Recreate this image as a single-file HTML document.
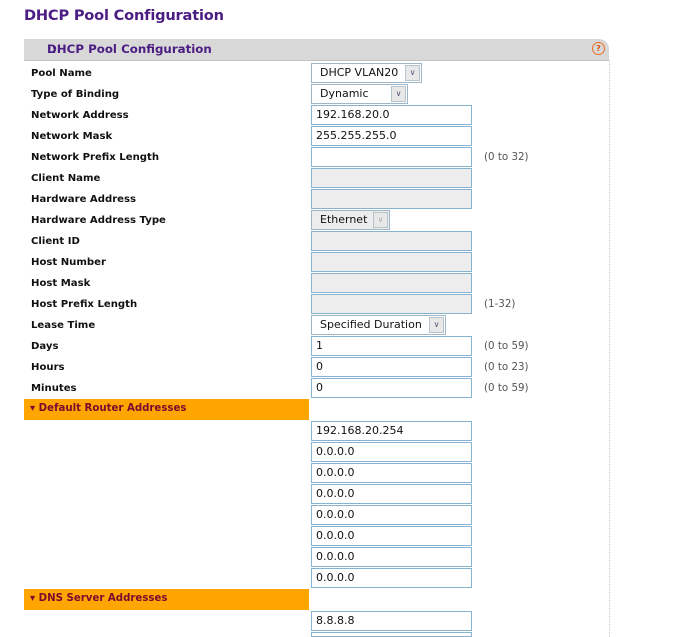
<!DOCTYPE html><html><head><style>
html,body{margin:0;width:690px;height:637px;overflow:hidden}
body{background:#fff;position:relative;font-family:"DejaVu Sans",Verdana,sans-serif}
.a{position:absolute}
h1{position:absolute;left:24px;top:7px;margin:0;font-size:14.6px;color:#4b1c82;font-weight:bold;font-family:"DejaVu Sans",sans-serif;letter-spacing:-0.2px}
.hd{left:24px;top:39px;width:585px;height:21px;background:#d8d8d8;border-top-right-radius:10px;border-bottom:1px solid #c4c4c4}
.hd span{position:absolute;left:23px;top:3px;font-size:11.8px;font-weight:bold;color:#4b1c82}
.dots{position:absolute;left:8px;top:5px;color:#f4f4f4;font-size:9px;font-weight:bold}
.q{position:absolute;right:4px;top:3px;width:11px;height:11px;border:1px solid #f07020;border-radius:50%;color:#e05010;font-size:8px;line-height:11px;text-align:center;font-weight:bold}
.vr{left:609px;top:60px;height:577px;border-left:1px dotted #c8c8c8}
.l{left:31px;font-size:10.1px;font-weight:bold;color:#111}
.i{left:311px;border:1px solid #88b3cf;font-size:11px;line-height:18px;padding-left:4px;box-sizing:border-box;width:161px;height:20px;color:#111}
.d{background:#ededed}
.s{left:311px;height:20px;border:1px solid #9fb6c8;box-sizing:border-box;font-size:11px;line-height:18px;padding-left:8px;color:#111;background:#fff}
.s b{position:absolute;right:1px;top:1px;width:15px;height:16px;background:#e8e8e8;border:1px solid #b8c4cc;box-sizing:border-box;font-weight:normal;font-size:8px;line-height:14px;text-align:center;color:#557}
.h{left:484px;font-size:10.3px;color:#555}
.ob{left:24px;width:285px;height:21px;background:#ffa500}
.ob span{position:absolute;left:6px;top:4px;font-size:10.2px;font-weight:bold;color:#7a0a30}
</style></head><body>
<h1>DHCP Pool Configuration</h1>
<div class="a hd"><span class="dots">::</span><span>DHCP Pool Configuration</span><div class="q">?</div></div>
<div class="a vr"></div>

<div class="a l" style="top:68px">Pool Name</div>
<div class="a s" style="top:63px;width:111px">DHCP VLAN20<b>&#8744;</b></div>
<div class="a l" style="top:89px">Type of Binding</div>
<div class="a s" style="top:84px;width:97px">Dynamic<b>&#8744;</b></div>
<div class="a l" style="top:110px">Network Address</div>
<div class="a i" style="top:105px">192.168.20.0</div>
<div class="a l" style="top:131px">Network Mask</div>
<div class="a i" style="top:126px">255.255.255.0</div>
<div class="a l" style="top:152px">Network Prefix Length</div>
<div class="a i" style="top:147px"></div><div class="a h" style="top:151px">(0 to 32)</div>
<div class="a l" style="top:173px">Client Name</div>
<div class="a i d" style="top:168px"></div>
<div class="a l" style="top:194px">Hardware Address</div>
<div class="a i d" style="top:189px"></div>
<div class="a l" style="top:215px">Hardware Address Type</div>
<div class="a s" style="top:210px;width:79px;background:#ededed">Ethernet<b style="color:#aaa">&#8744;</b></div>
<div class="a l" style="top:236px">Client ID</div>
<div class="a i d" style="top:231px"></div>
<div class="a l" style="top:257px">Host Number</div>
<div class="a i d" style="top:252px"></div>
<div class="a l" style="top:278px">Host Mask</div>
<div class="a i d" style="top:273px"></div>
<div class="a l" style="top:299px">Host Prefix Length</div>
<div class="a i d" style="top:294px"></div><div class="a h" style="top:298px">(1-32)</div>
<div class="a l" style="top:320px">Lease Time</div>
<div class="a s" style="top:315px;width:135px">Specified Duration<b>&#8744;</b></div>
<div class="a l" style="top:341px">Days</div>
<div class="a i" style="top:336px">1</div><div class="a h" style="top:340px">(0 to 59)</div>
<div class="a l" style="top:362px">Hours</div>
<div class="a i" style="top:357px">0</div><div class="a h" style="top:361px">(0 to 23)</div>
<div class="a l" style="top:383px">Minutes</div>
<div class="a i" style="top:378px">0</div><div class="a h" style="top:382px">(0 to 59)</div>

<div class="a ob" style="top:399px"><span>&#9662; Default Router Addresses</span></div>
<div class="a i" style="top:421px">192.168.20.254</div>
<div class="a i" style="top:442px">0.0.0.0</div>
<div class="a i" style="top:463px">0.0.0.0</div>
<div class="a i" style="top:484px">0.0.0.0</div>
<div class="a i" style="top:505px">0.0.0.0</div>
<div class="a i" style="top:526px">0.0.0.0</div>
<div class="a i" style="top:547px">0.0.0.0</div>
<div class="a i" style="top:568px">0.0.0.0</div>
<div class="a ob" style="top:589px"><span>&#9662; DNS Server Addresses</span></div>
<div class="a i" style="top:611px">8.8.8.8</div>
<div class="a i" style="top:632px;height:5px"></div>
</body></html>
